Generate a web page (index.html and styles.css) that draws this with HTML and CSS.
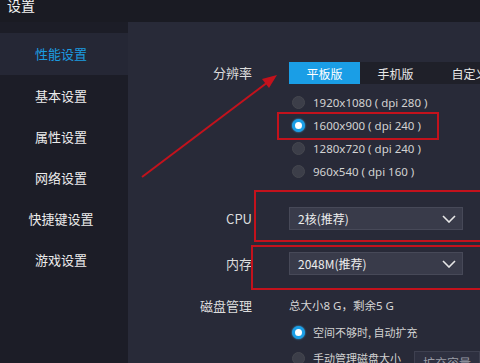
FILE: index.html
```html
<!DOCTYPE html>
<html lang="zh-CN">
    <head>
        <meta charset="UTF-8">
        <meta name="viewport" content="width=device-width, initial-scale=1.0">
        <title>设置</title>
        <link rel="stylesheet" href="styles.css">
    </head>
    <body>
        <div class="app">
            <div class="titlebar"><span>设置</span></div>
            <div class="main">
                <ul class="nav">
                    <li class="active">性能设置</li>
                    <li>基本设置</li>
                    <li>属性设置</li>
                    <li>网络设置</li>
                    <li>快捷键设置</li>
                    <li>游戏设置</li>
                </ul>
                <div class="panel">
                    <div class="row">
                        <div class="label">分辨率</div>
                        <div class="ctrl">
                            <div class="tabs">
                                <div class="tab on">平板版</div>
                                <div class="tab">手机版</div>
                                <div class="tab">自定义</div>
                            </div>
                            <div class="radios">
                                <div class="radio"><i></i>1920x1080 ( dpi 280 )</div>
                                <div class="radio checked"><i></i>1600x900 ( dpi 240 )</div>
                                <div class="radio"><i></i>1280x720 ( dpi 240 )</div>
                                <div class="radio"><i></i>960x540 ( dpi 160 )</div>
                            </div>
                        </div>
                    </div>
                    <div class="row r-cpu">
                        <div class="label">CPU</div>
                        <div class="ctrl">
                            <div class="select">2核(推荐)
                                <svg width="14" height="8" viewBox="0 0 14 8"><polyline points="1,1 7,7 13,1" fill="none" stroke="#e6e6e6" stroke-width="1.6"/></svg>
                            </div>
                        </div>
                    </div>
                    <div class="row r-mem">
                        <div class="label">内存</div>
                        <div class="ctrl">
                            <div class="select">2048M(推荐)
                                <svg width="14" height="8" viewBox="0 0 14 8"><polyline points="1,1 7,7 13,1" fill="none" stroke="#e6e6e6" stroke-width="1.6"/></svg>
                            </div>
                        </div>
                    </div>
                    <div class="row r-disk">
                        <div class="label">磁盘管理</div>
                        <div class="ctrl">
                            <div class="disk-info">总大小8 G，剩余5 G</div>
                            <div class="radio tall checked"><i></i>空间不够时, 自动扩充</div>
                            <div class="radio tall"><i></i>手动管理磁盘大小<button class="expand">扩充容量</button></div>
                        </div>
                    </div>
                </div>
            </div>
            <svg class="marks" width="480" height="363" viewBox="0 0 480 363">
                <g fill="none" stroke="#c3121c" stroke-width="2">
                    <rect x="278" y="113" width="160" height="26"/>
                    <rect x="255" y="191" width="240" height="50"/>
                    <rect x="252" y="246" width="240" height="43"/>
                    <line x1="142" y1="177" x2="268" y2="82"/>
                </g>
                <polygon points="277,75 269,88 262,79" fill="#c3121c"/>
            </svg>
        </div>
    </body>
</html>
```

FILE: styles.css
```css
:root{
    --blue: #1a9ee6;
    --red: #c3121c;
}
*{
    padding: 0;
    margin: 0;
    box-sizing: border-box;
    font-family: "Noto Sans", "Noto Sans CJK SC", sans-serif;
}
body{background: #282a38; width: 480px; height: 363px; overflow: hidden;}
.app{position: relative; width: 480px; height: 363px; overflow: hidden; display: flex; flex-direction: column;}
.titlebar{height: 22px; background: #1a1b23; color: #f2f2f2; padding-left: 7px; flex-shrink: 0;}
.titlebar span{display: block; font-size: 14px; line-height: 10px; font-family: "Noto Sans CJK SC", sans-serif;}
.main{flex: 1; display: flex;}

.nav{width: 128px; background: #1c1d27; list-style: none; padding-top: 11px; padding-right: 6px; flex-shrink: 0;}
.nav li{height: 41.5px; display: flex; align-items: center; justify-content: center; color: #ececec; font-size: 13px; font-family: "Noto Sans CJK SC", sans-serif;}
.nav li.active{background: #252735; color: #1b9ce0; margin-right: -6px; padding-right: 6px;}
.nav li:nth-child(n+2){height: 41.2px;}

.panel{flex: 1; padding-top: 40px; display: flex; flex-direction: column;}
.row{display: grid; grid-template-columns: 124px 1fr; column-gap: 37px; align-items: start;}
.label{text-align: right; color: #dcdcdc; font-size: 13px; font-family: "Noto Sans CJK SC", sans-serif; line-height: 22px; white-space: nowrap;}
.ctrl{min-width: 0;}

.tabs{display: flex; height: 22px; background: #1f2029; width: 260px;}
.tab{width: 71px; flex-shrink: 0; display: flex; align-items: center; justify-content: center; color: #e8e8e8; font-size: 12px; font-family: "Noto Sans CJK SC", sans-serif;}
.tab.on{background: var(--blue); color: #fff;}
.tab:nth-child(3){padding-left: 6px;}

.radios{margin-top: 7px; padding-left: 3px;}
.radio{height: 23px; display: flex; align-items: center; gap: 8px; color: #d2d2d2; font-size: 11.5px; white-space: nowrap;}
.radio i{width: 13px; height: 13px; border-radius: 50%; background: #3c3e49; border: 1px solid #45474f; flex-shrink: 0;}
.radio.checked i{background: #fff; border: 3.5px solid var(--blue); box-shadow: 0 0 2px #3fb4f2;}
.radio.tall{height: 26px; padding-left: 3px; font-size: 11px; font-family: "Noto Sans CJK SC", sans-serif;}

.r-cpu{margin-top: 24px;}
.r-mem{margin-top: 22px;}
.r-disk{margin-top: 22px;}
.r-cpu .label, .r-mem .label{line-height: 23px;}
.select{width: 174px; height: 23px; background: #393b4a; border: 1px solid #474958; display: flex; align-items: center; justify-content: space-between; padding: 0 6px 0 8px; color: #ececec; font-size: 12px; font-family: "Noto Sans CJK SC", sans-serif;}

.r-disk .label{line-height: 18px;}
.disk-info{height: 18px; line-height: 18px; color: #d6d6d6; font-size: 11.5px; margin-bottom: 4px; white-space: nowrap;}
.expand{margin-left: 5px; margin-top: 8px; width: 80px; height: 22px; background: #2e3040; border: 1px solid #3e4050; color: #9a9ca6; font-size: 12px; font-family: "Noto Sans CJK SC", sans-serif;}

.marks{position: absolute; left: 0; top: 0; pointer-events: none;}
```
